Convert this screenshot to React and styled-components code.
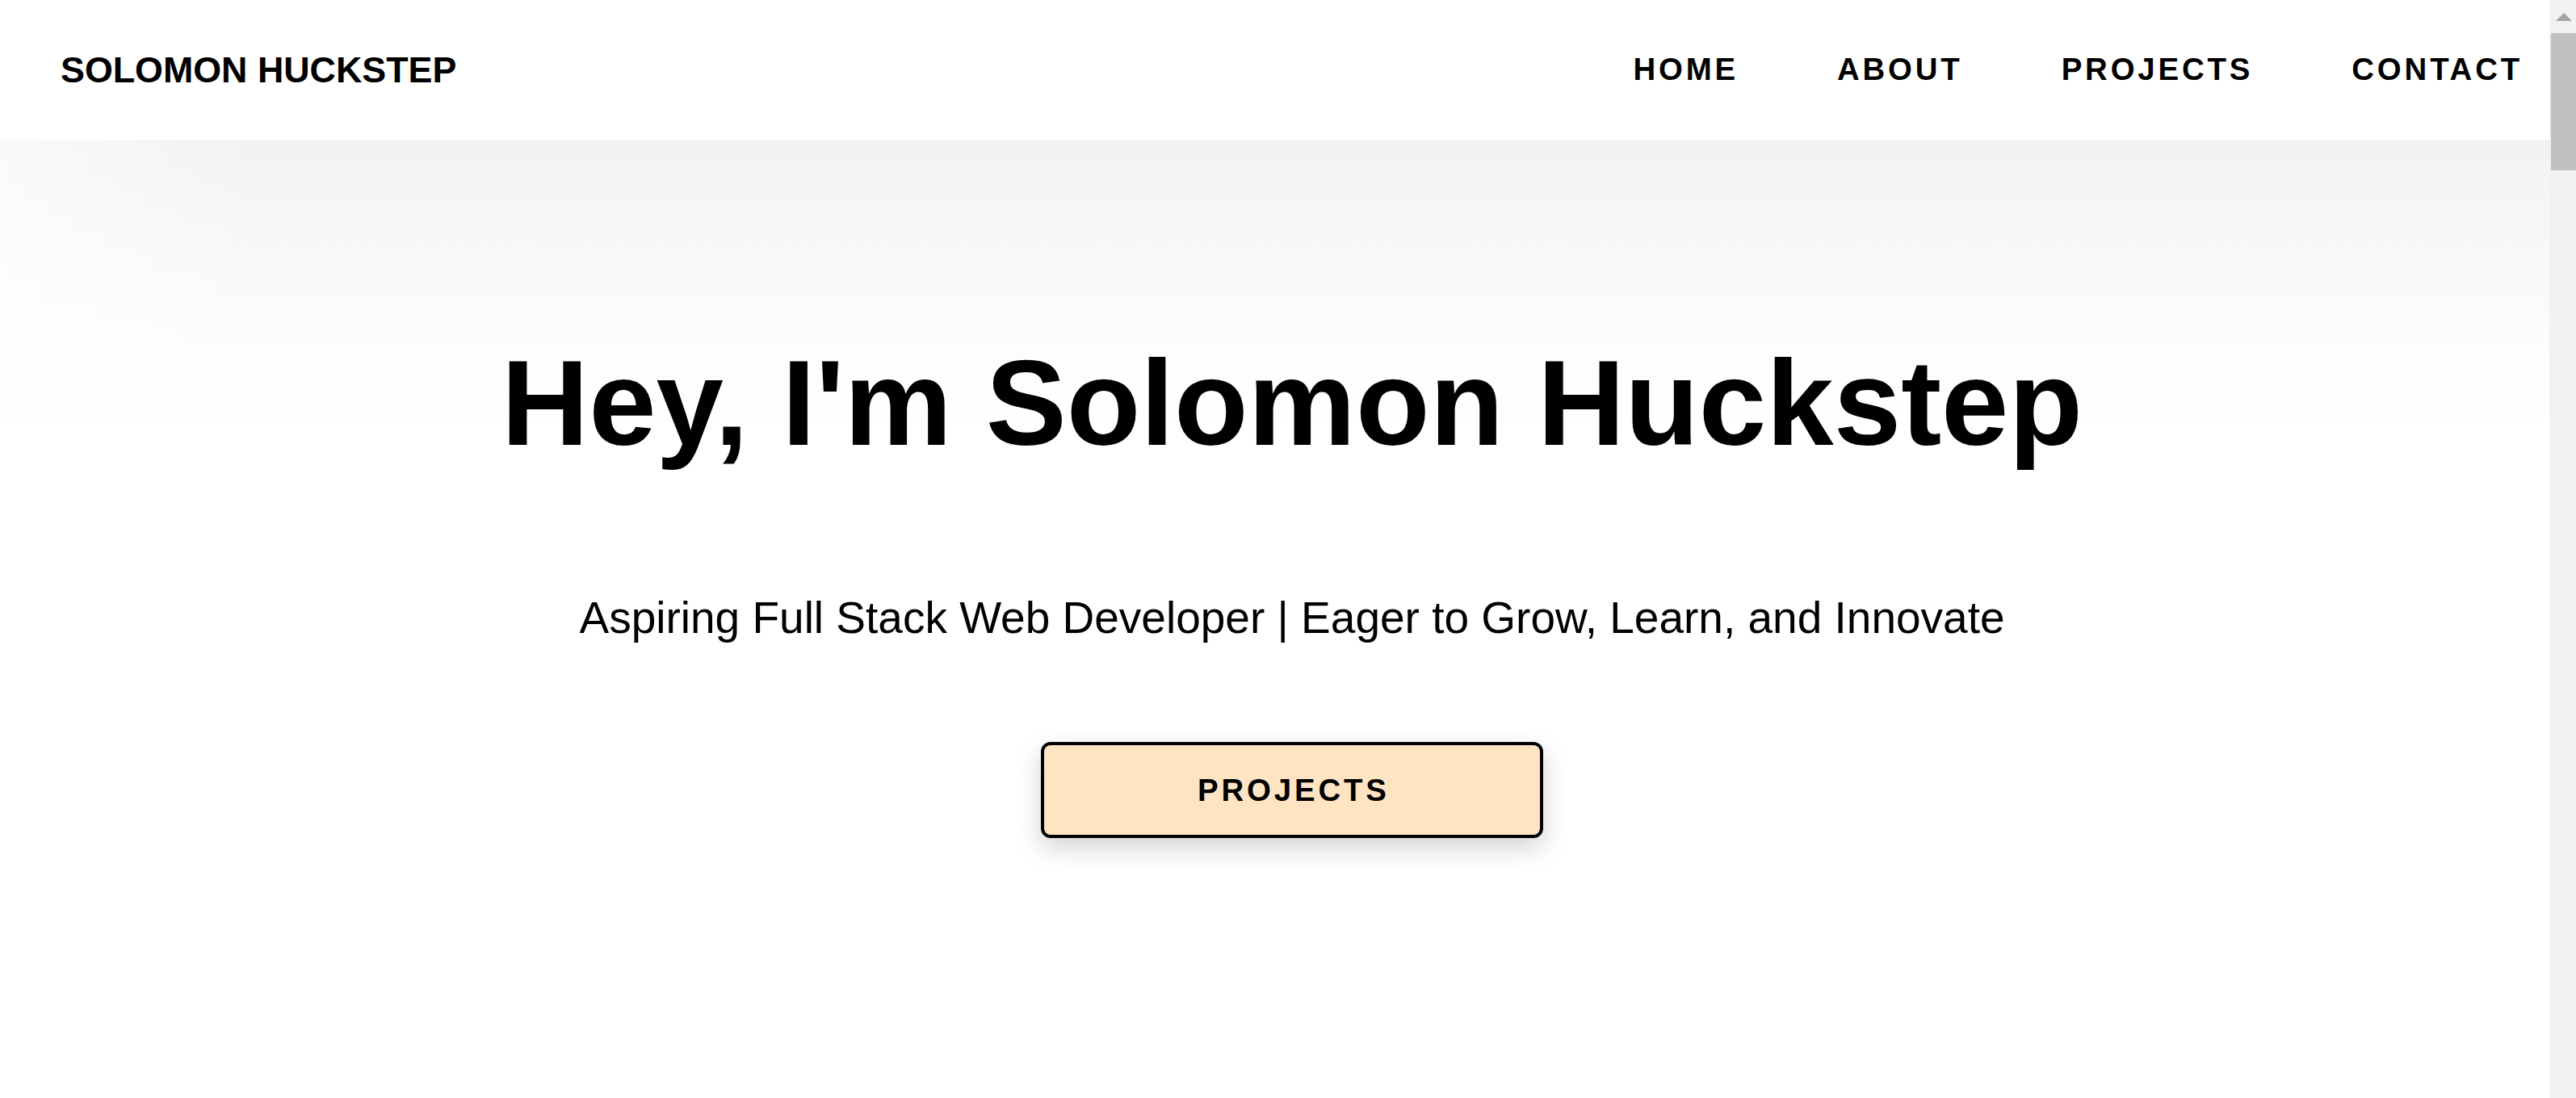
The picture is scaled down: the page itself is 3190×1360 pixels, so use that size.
import React from 'react'
import styled, { createGlobalStyle } from 'styled-components'

const GlobalStyle = createGlobalStyle`
    html, body {
        margin: 0;
        padding: 0;
        height: 100%;
        overflow: hidden;
        background: #fff;
    }

    body {
        font-family: "Liberation Sans", Arial, sans-serif;
        color: #000;
    }

    #root {
        height: 100%;
    }
`

const Window = styled.div`
    display: flex;
    height: 100vh;
`

const Page = styled.div`
    flex: 1;
    display: flex;
    flex-direction: column;
    min-width: 0;
`

const Header = styled.header`
    height: 173px;
    flex-shrink: 0;
    display: flex;
    align-items: center;
    justify-content: space-between;
    padding: 0 33px 0 75px;
    background: #fff;
`

const Logo = styled.div`
    font-size: 44.8px;
    font-weight: 700;
    line-height: 1;
`

const Nav = styled.nav`
    display: flex;
    align-items: center;
    gap: 122px;
`

const NavLink = styled.a`
    font-size: 38.4px;
    font-weight: 700;
    letter-spacing: 3.84px;
    line-height: 1;
    color: #000;
    text-decoration: none;
    text-transform: uppercase;
`

// soft shade under the header, lighter towards the left edge
const Hero = styled.main`
    flex: 1;
    display: flex;
    flex-direction: column;
    align-items: center;
    padding: 251px 0 0 43px;
    background:
        linear-gradient(to right, rgba(255, 255, 255, 0.6) 0, rgba(255, 255, 255, 0) 320px),
        linear-gradient(to bottom, #f2f2f2 0, #f4f4f4 50px, #f7f7f7 110px, #fafafa 190px, #fdfdfd 270px, #fff 360px);
`

const Title = styled.h1`
    margin: 0;
    font-size: 150px;
    font-weight: 700;
    line-height: 1;
`

const Tagline = styled.p`
    margin: 164px 0 0;
    font-size: 55px;
    font-weight: 400;
    line-height: 1;
`

const CallToAction = styled.button`
    margin-top: 126px;
    box-sizing: border-box;
    width: 622px;
    height: 119px;
    display: flex;
    align-items: center;
    justify-content: center;
    padding: 0 0 0 3.84px;
    background: #ffe4c4;
    border: 4px solid #000;
    border-radius: 12px;
    box-shadow: 0 12px 32px rgba(0, 0, 0, 0.18);
    font-family: "Liberation Sans", Arial, sans-serif;
    font-size: 38.4px;
    font-weight: 700;
    letter-spacing: 3.84px;
    color: #000;
    cursor: pointer;
`

const ScrollTrack = styled.div`
    width: 33px;
    flex-shrink: 0;
    display: flex;
    flex-direction: column;
    background: #f1f1f1;
`

const ScrollArrow = styled.div`
    height: 41px;
    display: flex;
    justify-content: center;
    padding: 16px 0 0 2px;
    box-sizing: border-box;

    &::before {
        content: '';
        width: 0;
        height: 0;
        border-left: 10px solid transparent;
        border-right: 10px solid transparent;
        border-bottom: 10px solid #a3a3a3;
    }
`

const ScrollThumb = styled.div`
    height: 170px;
    margin-left: 2px;
    background: #c1c1c1;
`

const links = ['Home', 'About', 'Projects', 'Contact']

export default function App() {
    return (
        <>
            <GlobalStyle />
            <Window>
                <Page>
                    <Header>
                        <Logo>SOLOMON HUCKSTEP</Logo>
                        <Nav>
                            {links.map(link => (
                                <NavLink key={link} href={`#${link.toLowerCase()}`}>{link}</NavLink>
                            ))}
                        </Nav>
                    </Header>
                    <Hero>
                        <Title>Hey, I'm Solomon Huckstep</Title>
                        <Tagline>Aspiring Full Stack Web Developer | Eager to Grow, Learn, and Innovate</Tagline>
                        <CallToAction>PROJECTS</CallToAction>
                    </Hero>
                </Page>
                <ScrollTrack>
                    <ScrollArrow />
                    <ScrollThumb />
                </ScrollTrack>
            </Window>
        </>
    )
}
